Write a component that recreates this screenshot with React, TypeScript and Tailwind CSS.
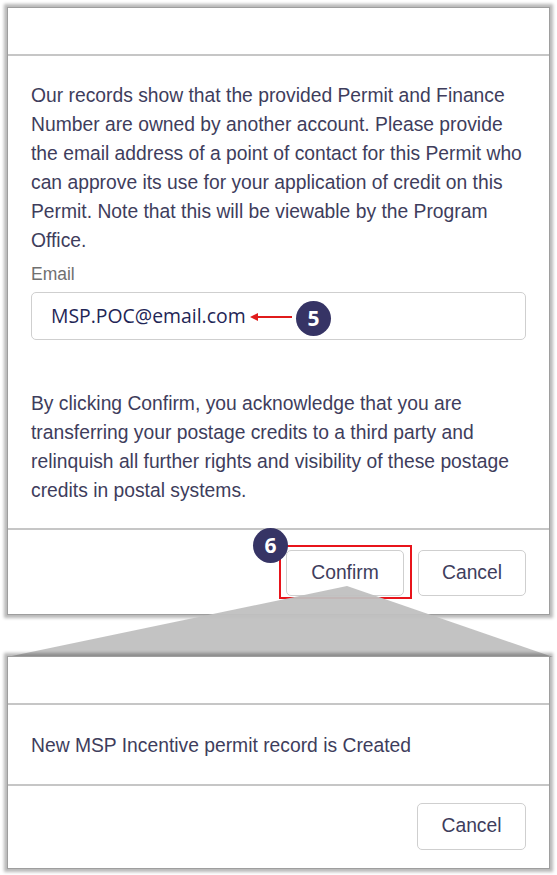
import React from 'react';

const panel =
  'bg-white border border-[#9e9e9e] shadow-[0_0_3px_3px_rgba(0,0,0,0.28)] flex flex-col';
const btn =
  'h-[46px] rounded-[5px] border border-[#cfcfcf] bg-white text-[19.3px] text-[#3e3d5c] flex items-center justify-center';

function Badge({ n, className }: { n: string; className: string }) {
  return (
    <span
      className={`absolute w-[35px] h-[35px] rounded-full bg-[#363465] text-white flex items-center justify-center text-[21px] font-bold font-[Open_Sans,sans-serif] ${className}`}
    >
      {n}
    </span>
  );
}

export default function App() {
  return (
    <div className="relative w-[557px] h-[875px] overflow-hidden bg-white px-[7px] pt-[7px] font-[Liberation_Sans,Arial,sans-serif] text-[#3e3d5c]">
      {/* first dialog */}
      <div className={`${panel} h-[608px]`}>
        <div className="h-[48px] shrink-0 border-b-2 border-[#c6c6c6]" />
        <div className="flex-1 min-h-0 border-b-2 border-[#c6c6c6] px-[23px] pt-[25px]">
          <p className="-mr-[5px] text-[19.3px] leading-[29px]">
            Our records show that the provided Permit and Finance Number are owned by another account. Please
            provide the email address of a point of contact for this Permit who can approve its use for your
            application of credit on this Permit. Note that this will be viewable by the Program Office.
          </p>
          <label className="block mt-[9px] text-[17.5px] leading-[20px] text-[#707070]">Email</label>
          <div className="relative mt-[8px] h-[48px] rounded-[5px] border border-[#cfcfcf] pl-[19px] flex items-center">
            <span className="font-[Open_Sans,sans-serif] text-[19.4px] text-[#1f2656]">MSP.POC@email.com</span>
            <svg className="absolute left-[218px] top-[19px]" width="44" height="10" viewBox="0 0 44 10">
              <line x1="6" y1="5" x2="42" y2="5" stroke="#e01b1b" strokeWidth="2" />
              <polygon points="0,5 8,1 8,9" fill="#e01b1b" />
            </svg>
            <Badge n="5" className="left-[264px] top-[8px]" />
          </div>
          <p className="-mr-[5px] mt-[49px] text-[19.3px] leading-[29px]">
            By clicking Confirm, you acknowledge that you are transferring your postage credits to a third party
            and relinquish all further rights and visibility of these postage credits in postal systems.
          </p>
        </div>
        <div className="h-[84px] shrink-0 flex justify-end gap-[14px] pt-[20px] pr-[23px]">
          <div className="relative">
            <button className={`${btn} w-[118px]`}>Confirm</button>
            <span className="absolute -left-[7px] -top-[5px] w-[133px] h-[54px] border-2 border-[#e8141b]" />
            <Badge n="6" className="-left-[33px] -top-[22px]" />
          </div>
          <button className={`${btn} w-[108px]`}>Cancel</button>
        </div>
      </div>

      {/* zoom wedge */}
      <svg className="absolute left-0 top-0" width="557" height="875" viewBox="0 0 557 875">
        <polygon points="347,586 7,657 553,657" fill="#c0c0c0" fillOpacity="0.95" />
      </svg>

      {/* second dialog */}
      <div className={`${panel} relative mt-[41px] h-[213px]`}>
        <div className="h-[48px] shrink-0 border-b-2 border-[#c6c6c6]" />
        <div className="h-[81px] shrink-0 border-b-2 border-[#c6c6c6] px-[23px] pt-[26px]">
          <p className="text-[19.3px] leading-[29px]">New MSP Incentive permit record is Created</p>
        </div>
        <div className="flex-1 flex justify-end pt-[17px] pr-[23px]">
          <button className={`${btn} w-[109px] h-[47px]`}>Cancel</button>
        </div>
      </div>
    </div>
  );
}
